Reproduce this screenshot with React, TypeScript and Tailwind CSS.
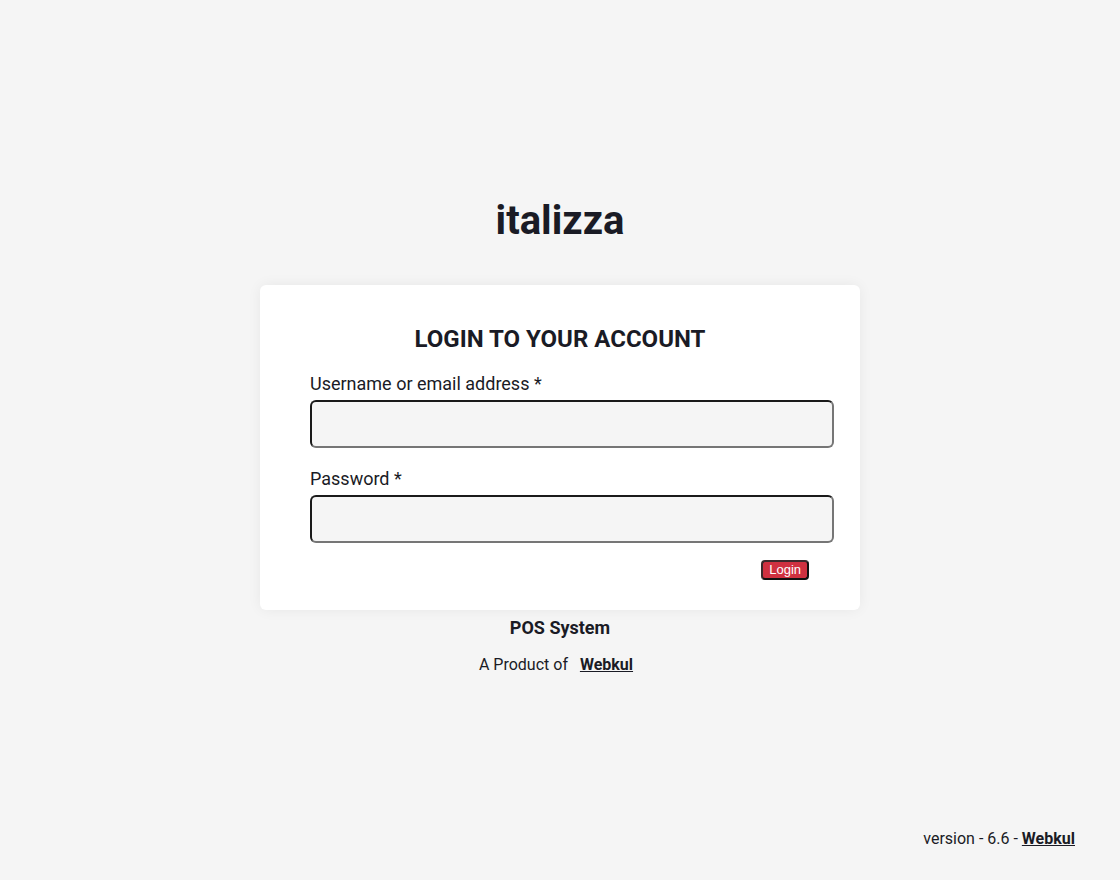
export default function App() {
  return (
    <div
      className="min-h-screen bg-[#f5f5f5] text-[#1a1b25] flex flex-col"
      style={{ fontFamily: "Roboto, 'Liberation Sans', sans-serif" }}
    >
      <main className="flex-1 flex flex-col items-center pt-[197px]">
        {/* Brand */}
        <h1 className="text-[40px] leading-[48px] font-bold mb-[40px]">italizza</h1>

        {/* Login card */}
        <div className="w-[600px] bg-white rounded-md shadow-[0_0_14px_rgba(0,0,0,0.06)] pl-[50px] pr-[26px] pt-[39px] pb-[30px]">
          <h2 className="text-center text-[24px] leading-[30px] font-bold mb-[18px] mr-[24px]">
            LOGIN TO YOUR ACCOUNT
          </h2>
          <label className="block text-[18px] leading-[24px] mb-[4px]">Username or email address *</label>
          <input
            type="text"
            className="block w-full h-[48px] bg-[#f5f5f5] rounded-md border-2 border-t-[#1a1a1a] border-l-[#1a1a1a] border-b-[#767676] border-r-[#767676] outline-none px-3"
          />
          <label className="block text-[18px] leading-[24px] mt-[19px] mb-[4px]">Password *</label>
          <input
            type="password"
            className="block w-full h-[48px] bg-[#f5f5f5] rounded-md border-2 border-t-[#1a1a1a] border-l-[#1a1a1a] border-b-[#767676] border-r-[#767676] outline-none px-3"
          />
          <div className="flex justify-end mt-[17px] pr-[25px]">
            <button
              className="h-[20px] px-[6px] bg-[#cf3140] text-white text-[13px] leading-[14px] rounded-[4px] border-2 border-t-[#3a2a2c] border-l-[#3a2a2c] border-b-[#111] border-r-[#111]"
              style={{ fontFamily: "Arial, 'Liberation Sans', sans-serif" }}
            >
              Login
            </button>
          </div>
        </div>

        <div className="mt-[6px] text-[18px] leading-[24px] font-bold">POS System</div>
        <div className="mt-[13px] text-[16px] leading-[24px] pr-[8px]">
          A Product of <a className="ml-[8px] font-bold underline" href="#">Webkul</a>
        </div>
      </main>

      <footer className="flex justify-end pr-[45px] pb-[29px] text-[16px] leading-[24px]">
        <span>
          version - 6.6 - <a className="font-bold underline" href="#">Webkul</a>
        </span>
      </footer>
    </div>
  )
}
